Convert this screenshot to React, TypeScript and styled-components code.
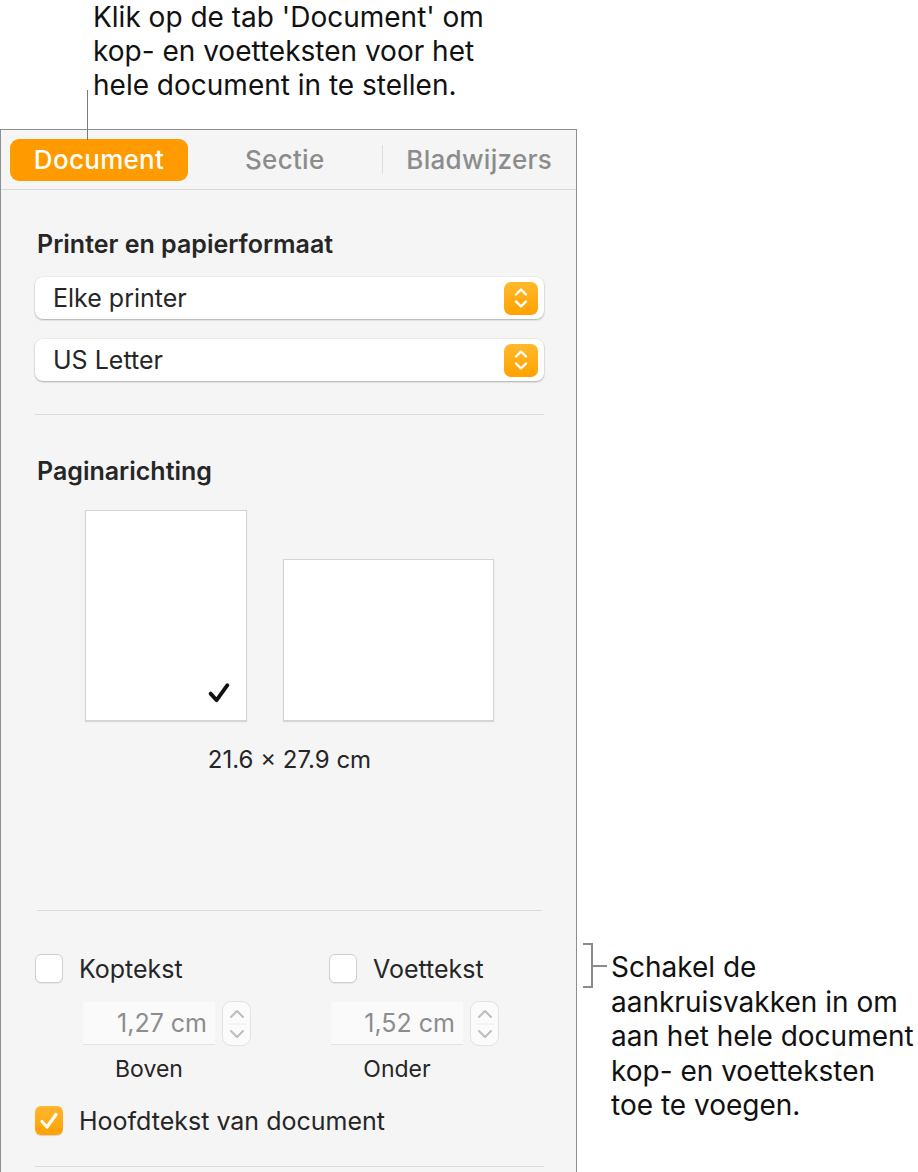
import React from "react";
import styled, { createGlobalStyle } from "styled-components";

const GlobalStyle = createGlobalStyle`
  html, body {
    margin: 0;
    padding: 0;
    background: #ffffff;
  }
  body {
    font-family: Inter, "Noto Sans", "Liberation Sans", sans-serif;
    color: #1f1f1f;
  }
`;

const Page = styled.div`
  position: relative;
  width: 918px;
  height: 1172px;
  overflow: hidden;
`;

const TopNote = styled.div`
  height: 129px;
  box-sizing: border-box;
  padding-left: 93px;
  font-size: 28px;
  line-height: 34px;
  color: #111;
`;

const Leader = styled.div`
  position: absolute;
  left: 87px;
  top: 90px;
  width: 1px;
  height: 50px;
  background: #7a7a7a;
  z-index: 2;
`;

const Row = styled.div`
  display: flex;
  align-items: flex-start;
`;

const Panel = styled.div`
  width: 577px;
  height: 1100px;
  box-sizing: border-box;
  border: 1px solid #8f8f8f;
  background: #f5f5f5;
  flex: none;
`;

const TabBar = styled.div`
  display: flex;
  align-items: center;
  height: 60px;
  box-sizing: border-box;
  padding-left: 9px;
  border-bottom: 1px solid #d9d9d9;
`;

const Tab = styled.div<{ $active?: boolean }>`
  height: 42px;
  display: flex;
  align-items: center;
  justify-content: center;
  font-size: 26px;
  font-weight: 500;
  letter-spacing: 0.3px;
  border-radius: 9px;
  ${(p) =>
    p.$active
      ? `width: 178px; flex: none; background: #ff9a00; color: #fff;`
      : `flex: 1; color: #8c8c8c;`}
`;

const TabSep = styled.div`
  width: 1px;
  height: 29px;
  background: #dcdcdc;
`;

const Body = styled.div`
  padding: 41px 32px 0 34px;
  display: flex;
  flex-direction: column;
`;

const Heading = styled.div`
  font-size: 25px;
  line-height: 26px;
  font-weight: 600;
  color: #262626;
  padding-left: 2px;
`;

const Popup = styled.div`
  margin-top: 20px;
  height: 42px;
  display: flex;
  align-items: center;
  justify-content: space-between;
  padding: 0 6px 0 18px;
  background: #fff;
  border-radius: 8px;
  box-shadow: 0 1px 2px rgba(0, 0, 0, 0.28), 0 0 0 0.5px rgba(0, 0, 0, 0.06);
  font-size: 25px;
  color: #262626;
`;

const PopupArrows = styled.div`
  width: 34px;
  height: 33px;
  border-radius: 7px;
  background: linear-gradient(#ffb92c, #ffa200);
  display: flex;
  align-items: center;
  justify-content: center;
`;

const Divider = styled.div<{ $inset?: number }>`
  height: 1px;
  background: #dadada;
  margin: 0 ${(p) => p.$inset || 0}px;
`;

const Pages = styled.div`
  margin-top: 26px;
  display: flex;
  align-items: flex-end;
  justify-content: center;
  gap: 36px;
`;

const Sheet = styled.div<{ $w: number; $h: number }>`
  width: ${(p) => p.$w}px;
  height: ${(p) => p.$h}px;
  box-sizing: border-box;
  background: #fff;
  border: 1px solid #d4d4d4;
  box-shadow: 0 1px 1px rgba(0, 0, 0, 0.12);
  display: flex;
  align-items: flex-end;
  justify-content: flex-end;
  padding: 0 15px 15px 0;
`;

const Dimensions = styled.div`
  margin-top: 26px;
  text-align: center;
  font-size: 24px;
  line-height: 26px;
  color: #262626;
`;

const CheckGrid = styled.div`
  display: grid;
  grid-template-columns: 294px 1fr;
  row-gap: 18px;
`;

const CheckRow = styled.label`
  display: flex;
  align-items: center;
  gap: 16px;
  font-size: 25px;
  color: #262626;
  height: 29px;
`;

const Box = styled.span<{ $on?: boolean }>`
  width: 28px;
  height: 29px;
  box-sizing: border-box;
  border-radius: 6px;
  display: flex;
  align-items: center;
  justify-content: center;
  ${(p) =>
    p.$on
      ? `background: linear-gradient(#ffb631, #ffa100); box-shadow: 0 1px 1px rgba(0,0,0,0.15);`
      : `background: #fff; border: 1px solid #cfcfcf; box-shadow: 0 1px 1px rgba(0,0,0,0.06);`}
`;

const Spinner = styled.div<{ $indent: number }>`
  padding-left: ${(p) => p.$indent}px;
  display: flex;
  flex-direction: column;
  align-items: flex-start;
`;

const SpinRow = styled.div`
  display: flex;
  align-items: center;
  gap: 7px;
`;

const NumField = styled.div`
  width: 132px;
  height: 43px;
  box-sizing: border-box;
  background: #fafafa;
  border-bottom: 1px solid #e3e3e3;
  display: flex;
  align-items: center;
  justify-content: flex-end;
  padding-right: 8px;
  font-size: 25px;
  color: #8d8d8d;
`;

const Stepper = styled.div`
  width: 29px;
  height: 45px;
  box-sizing: border-box;
  border: 1px solid #e2e2e2;
  border-radius: 9px;
  background: #fbfbfb;
  display: flex;
  align-items: center;
  justify-content: center;
`;

const SpinLabel = styled.div`
  width: 132px;
  text-align: center;
  margin-top: 10px;
  font-size: 23px;
  line-height: 26px;
  color: #262626;
`;

const SideNote = styled.div`
  margin-top: 814px;
  margin-left: 6px;
  display: flex;
  align-items: flex-start;
`;

const Bracket = styled.div`
  width: 10px;
  height: 45px;
  box-sizing: border-box;
  border: 2px solid #8a8a8a;
  border-left: none;
  flex: none;
`;

const Tick = styled.div`
  width: 14px;
  height: 2px;
  background: #8a8a8a;
  margin-top: 22px;
  flex: none;
`;

const SideText = styled.div`
  margin-top: 7px;
  margin-left: 4px;
  font-size: 28px;
  line-height: 34.5px;
  color: #111;
`;

const Chevrons = ({ color }: { color: string }) => (
  <svg width="16" height="26" viewBox="0 0 16 26" fill="none">
    <path d="M3 9.5 L8 4.5 L13 9.5" stroke={color} strokeWidth="2.4" strokeLinecap="round" strokeLinejoin="round" />
    <path d="M3 16.5 L8 21.5 L13 16.5" stroke={color} strokeWidth="2.4" strokeLinecap="round" strokeLinejoin="round" />
  </svg>
);

const SmallChevrons = () => (
  <svg width="20" height="40" viewBox="0 0 20 40" fill="none">
    <path d="M4 13 L10 7 L16 13" stroke="#bcbcbc" strokeWidth="2" strokeLinecap="round" strokeLinejoin="round" />
    <line x1="1" y1="20" x2="19" y2="20" stroke="#ececec" strokeWidth="1" />
    <path d="M4 27 L10 33 L16 27" stroke="#bcbcbc" strokeWidth="2" strokeLinecap="round" strokeLinejoin="round" />
  </svg>
);

const Check = ({ color, size = 20 }: { color: string; size?: number }) => (
  <svg width={size} height={size} viewBox="0 0 20 20" fill="none">
    <path d="M3 10.5 L8 16 L17 3.5" stroke={color} strokeWidth="3.2" strokeLinecap="round" strokeLinejoin="round" />
  </svg>
);

function Spin({ value, label, indent }: { value: string; label: string; indent: number }) {
  return (
    <Spinner $indent={indent}>
      <SpinRow>
        <NumField>{value}</NumField>
        <Stepper>
          <SmallChevrons />
        </Stepper>
      </SpinRow>
      <SpinLabel>{label}</SpinLabel>
    </Spinner>
  );
}

export default function App() {
  return (
    <Page>
      <GlobalStyle />
      <TopNote>
        Klik op de tab 'Document' om
        <br />
        kop- en voetteksten voor het
        <br />
        hele document in te stellen.
      </TopNote>
      <Leader />
      <Row>
        <Panel>
          <TabBar>
            <Tab $active>Document</Tab>
            <Tab>Sectie</Tab>
            <TabSep />
            <Tab>Bladwijzers</Tab>
          </TabBar>
          <Body>
            <Heading>Printer en papierformaat</Heading>
            <Popup>
              Elke printer
              <PopupArrows>
                <Chevrons color="#fff" />
              </PopupArrows>
            </Popup>
            <Popup>
              US Letter
              <PopupArrows>
                <Chevrons color="#fff" />
              </PopupArrows>
            </Popup>
            <div style={{ height: 33 }} />
            <Divider />
            <div style={{ height: 43 }} />
            <Heading>Paginarichting</Heading>
            <Pages>
              <Sheet $w={162} $h={211}>
                <Check color="#111" size={24} />
              </Sheet>
              <Sheet $w={211} $h={162} />
            </Pages>
            <Dimensions>21.6 × 27.9 cm</Dimensions>
            <div style={{ height: 137 }} />
            <Divider $inset={2} />
            <div style={{ height: 43 }} />
            <CheckGrid>
              <CheckRow>
                <Box />
                Koptekst
              </CheckRow>
              <CheckRow>
                <Box />
                Voettekst
              </CheckRow>
              <Spin value="1,27 cm" label="Boven" indent={48} />
              <Spin value="1,52 cm" label="Onder" indent={2} />
              <CheckRow style={{ gridColumn: "1 / 3", marginTop: 6 }}>
                <Box $on>
                  <Check color="#fff" size={20} />
                </Box>
                Hoofdtekst van document
              </CheckRow>
            </CheckGrid>
            <div style={{ height: 31 }} />
            <Divider />
          </Body>
        </Panel>
        <SideNote>
          <Bracket />
          <Tick />
          <SideText>
            Schakel de
            <br />
            aankruisvakken in om
            <br />
            aan het hele document
            <br />
            kop- en voetteksten
            <br />
            toe te voegen.
          </SideText>
        </SideNote>
      </Row>
    </Page>
  );
}
